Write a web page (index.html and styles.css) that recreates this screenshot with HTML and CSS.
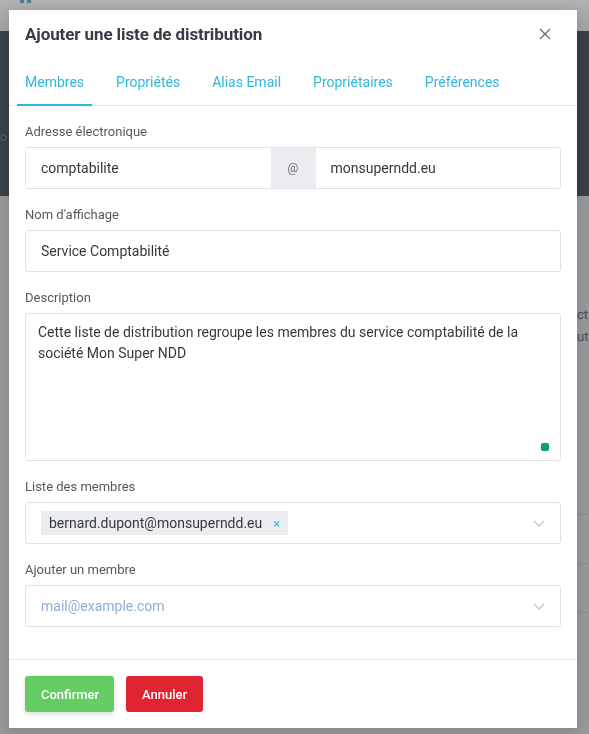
FILE: index.html
```html
<!DOCTYPE html>
<html lang="fr">
<head>
<meta charset="utf-8">
<title>Ajouter une liste de distribution</title>
<link rel="stylesheet" href="styles.css">
</head>
<body>
<div class="page">
  <div class="topbar"><span class="logo"><i></i><i></i></span></div>
  <div class="band"><span class="band-text">o-|</span></div>
  <div class="content">
    <div class="content-text">
      <div class="ct-row">ct</div>
      <div class="ct-row">ut</div>
    </div>
    <div class="row-line first"></div>
    <div class="row-line"></div>
    <div class="row-line"></div>
  </div>
</div>

<div class="modal">
  <div class="modal-header">
    <h1 class="modal-title">Ajouter une liste de distribution</h1>
    <button class="close" aria-label="Fermer">
      <svg width="12" height="12" viewBox="0 0 12 12"><path d="M1 1L11 11M11 1L1 11" stroke="#6b6f76" stroke-width="1.4" fill="none"/></svg>
    </button>
  </div>
  <nav class="tabs">
    <a class="tab active">Membres</a>
    <a class="tab">Propriétés</a>
    <a class="tab">Alias Email</a>
    <a class="tab">Propriétaires</a>
    <a class="tab">Préférences</a>
  </nav>
  <div class="modal-body">
    <div class="field">
      <label class="label">Adresse électronique</label>
      <div class="input-group">
        <div class="ig-part">comptabilite</div>
        <div class="ig-addon">@</div>
        <div class="ig-part">monsuperndd.eu</div>
      </div>
    </div>
    <div class="field">
      <label class="label">Nom d'affichage</label>
      <div class="input">Service Comptabilité</div>
    </div>
    <div class="field">
      <label class="label">Description</label>
      <div class="textarea">Cette liste de distribution regroupe les membres du service comptabilité de la société Mon Super NDD<span class="dot"></span></div>
    </div>
    <div class="field">
      <label class="label">Liste des membres</label>
      <div class="select">
        <span class="tag">bernard.dupont@monsuperndd.eu<span class="tag-x">×</span></span>
        <svg class="chev" width="12" height="7" viewBox="0 0 12 7"><path d="M1 1L6 6L11 1" stroke="#c3c6cd" stroke-width="1.3" fill="none"/></svg>
      </div>
    </div>
    <div class="field last">
      <label class="label">Ajouter un membre</label>
      <div class="select">
        <span class="placeholder">mail@example.com</span>
        <svg class="chev" width="12" height="7" viewBox="0 0 12 7"><path d="M1 1L6 6L11 1" stroke="#c3c6cd" stroke-width="1.3" fill="none"/></svg>
      </div>
    </div>
  </div>
  <div class="modal-footer">
    <button class="btn btn-confirm">Confirmer</button>
    <button class="btn btn-cancel">Annuler</button>
  </div>
</div>
</body>
</html>
```
FILE: styles.css
```css
* { box-sizing: border-box; }
html, body { margin: 0; padding: 0; }
body {
  font-family: Roboto, "Liberation Sans", Arial, sans-serif;
  background: #97989a;
  height: 734px;
  overflow: hidden;
}
.page { display: flex; flex-direction: column; height: 734px; }
.topbar {
  height: 31px;
  background: linear-gradient(#b2b2b2, #a2a2a2);
  display: flex;
  align-items: flex-start;
  padding-left: 20px;
}
.logo { display: flex; gap: 3px; }
.logo i { display: block; width: 4px; height: 3px; background: #4d7d96; }
.band {
  height: 165px;
  background: #3a4047;
  display: flex;
  align-items: flex-end;
  padding-bottom: 52px;
}
.band-text { color: #5c6168; font-size: 12px; margin-left: 0; }
.content { flex: 1; display: flex; flex-direction: column; align-items: flex-end; }
.content-text { padding-top: 108px; width: 12px; font-size: 13px; color: #4a4c50; line-height: 22px; }
.ct-row { white-space: nowrap; }
.row-line { width: 12px; height: 1px; background: #8c8d90; margin-top: 48px; }
.row-line.first { margin-top: 166px; }

.modal {
  position: fixed;
  top: 10px;
  left: 9px;
  width: 568px;
  background: #fff;
  box-shadow: 0 2px 12px rgba(0,0,0,0.15);
}
.modal-header {
  display: flex;
  align-items: center;
  justify-content: space-between;
  padding: 0 16px;
  height: 48px;
}
.modal-title {
  margin: 0;
  font-size: 17px;
  font-weight: 700;
  color: #363b44;
  letter-spacing: -0.1px;
  line-height: 20px;
}
.close {
  border: 0;
  background: none;
  padding: 0;
  width: 12px;
  height: 12px;
  margin-right: 10px;
  display: flex;
}
.tabs {
  display: flex;
  gap: 16px;
  padding: 0 8px;
  border-bottom: 1px solid #e7e8ea;
  margin-top: 2px;
}
.tab {
  font-size: 14px;
  color: #33b7de;
  padding: 14px 8px 13px 8px;
  line-height: 17px;
  border-bottom: 2px solid transparent;
  margin-bottom: -1px;
}
.tab.active { border-bottom-color: #2fb8dd; }

.modal-body { padding: 18px 16px 16px 16px; }
.field { margin-bottom: 18px; }
.field.last { margin-bottom: 16px; }
.label {
  display: block;
  font-size: 13px;
  color: #55595f;
  line-height: 16px;
  margin-bottom: 7px;
}
.input-group {
  display: flex;
  border: 1px solid #dfe1e5;
  border-radius: 3px;
  height: 42px;
}
.ig-part {
  flex: 1;
  display: flex;
  align-items: center;
  padding: 0 15px;
  font-size: 14px;
  color: #35393e;
}
.ig-addon {
  width: 45px;
  background: #ebecf0;
  display: flex;
  align-items: center;
  justify-content: center;
  font-size: 12px;
  color: #6b6e74;
}
.input {
  border: 1px solid #dfe1e5;
  border-radius: 3px;
  height: 42px;
  display: flex;
  align-items: center;
  padding: 0 15px;
  font-size: 14px;
  color: #35393e;
}
.textarea {
  border: 1px solid #dfe1e5;
  border-radius: 3px;
  height: 148px;
  padding: 8px 12px;
  font-size: 14px;
  line-height: 21px;
  color: #35393e;
  position: relative;
}
.dot {
  position: absolute;
  right: 11px;
  bottom: 9px;
  width: 8px;
  height: 8px;
  border-radius: 2px;
  background: #10a070;
}
.select {
  border: 1px solid #dfe1e5;
  border-radius: 3px;
  height: 42px;
  display: flex;
  align-items: center;
  justify-content: space-between;
  padding: 0 15px 0 15px;
}
.tag {
  background: #ebecf0;
  font-size: 14px;
  color: #35393e;
  height: 24px;
  display: flex;
  align-items: center;
  padding: 0 8px;
}
.tag-x { color: #33b7de; font-size: 13px; margin-left: 11px; }
.placeholder { font-size: 14px; color: #8caed6; }
.chev { display: block; }

.modal-footer {
  border-top: 1px solid #e7e8ea;
  padding: 16px;
  display: flex;
  gap: 12px;
}
.btn {
  border: 0;
  border-radius: 3px;
  height: 36px;
  font-family: Roboto, "Liberation Sans", Arial, sans-serif;
  font-size: 13px;
  font-weight: 500;
  color: #fff;
  padding: 0 16px;
}
.btn-confirm { background: #64cc62; width: 89px; box-shadow: 0 2px 5px rgba(0,0,0,0.15); }
.btn-cancel { background: #e12432; width: 77px; }
```
